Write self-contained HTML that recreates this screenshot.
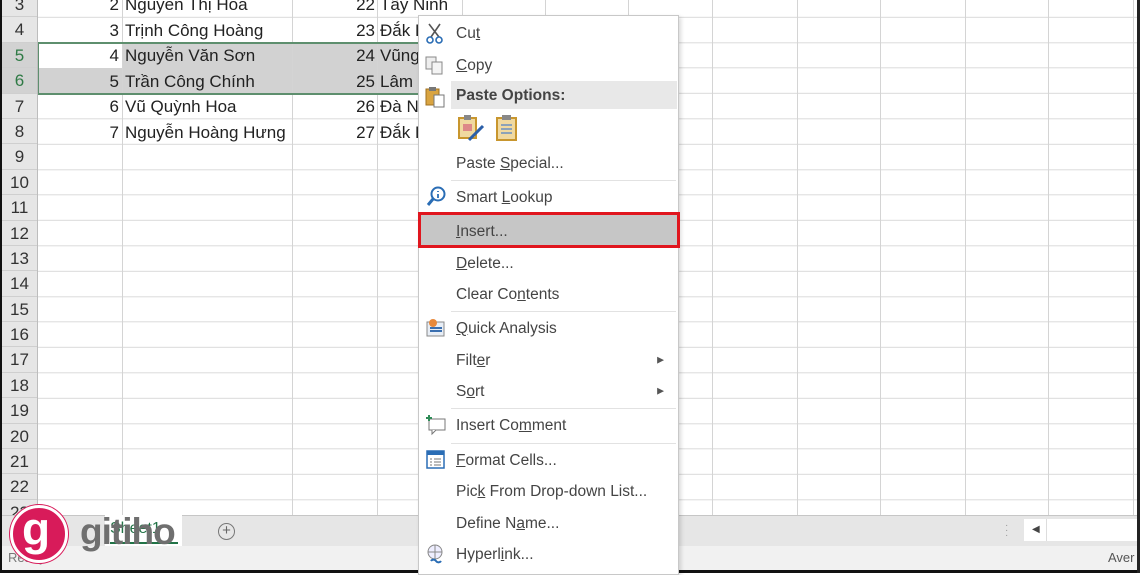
<!DOCTYPE html>
<html><head><meta charset="utf-8"><style>
*{margin:0;padding:0;box-sizing:border-box}
body{width:1140px;height:573px;overflow:hidden;background:#fff;position:relative;font-family:"Liberation Sans",sans-serif}
.grid{position:absolute;left:0;top:0;width:1140px;height:515px;
background-image:repeating-linear-gradient(to bottom,transparent 0,transparent 24.4px,#dadada 24.4px,#dadada 25.4px);background-position:0 -7.7px}
.vl{position:absolute;top:0;height:515px;width:1px;background:#d4d4d4}
.rh{position:absolute;left:2px;top:-8px;width:36px;background:#e6e6e6;border-right:1px solid #bdbdbd}
.rh div{height:25.4px;line-height:25.4px;text-align:center;font-size:17px;color:#333;border-bottom:1px solid #cfcfcf}
.c{position:absolute;font-size:17px;color:#222;height:25px;line-height:25px;white-space:nowrap}
.menu{position:absolute;left:418px;top:15px;width:261px;height:560px;background:#fff;border:1px solid #c8c8c8;box-shadow:2px 2px 4px rgba(0,0,0,.15)}
.mi{position:absolute;left:37px;font-size:15.5px;color:#444;white-space:nowrap;transform:translateY(-50%)}
.sep{position:absolute;left:32px;right:2px;height:1px;background:#e2e2e2}
.arr{position:absolute;right:14px;font-size:9px;color:#555;transform:translateY(-50%)}
</style></head><body>
<div class="grid"></div>
<div style="position:absolute;left:37px;top:43px;width:381px;height:51px;background:#d2d2d2"></div>
<div style="position:absolute;left:37px;top:43px;width:85px;height:25px;background:#fff"></div>
<div class="vl" style="left:122px"></div><div class="vl" style="left:292px"></div><div class="vl" style="left:377px"></div>
<div class="vl" style="left:462px"></div><div class="vl" style="left:545px"></div><div class="vl" style="left:628px"></div>
<div class="vl" style="left:712px"></div><div class="vl" style="left:797px"></div><div class="vl" style="left:880px"></div>
<div class="vl" style="left:965px"></div><div class="vl" style="left:1048px"></div><div class="vl" style="left:1133px"></div>
<div style="position:absolute;left:37px;top:42px;width:400px;height:53px;border:2px solid #5e8f6e"></div>
<div class="rh">
<div>3</div><div>4</div><div style="background:#d2d2d2;color:#2f7a45">5</div><div style="background:#d2d2d2;color:#2f7a45">6</div><div>7</div><div>8</div><div>9</div><div>10</div><div>11</div><div>12</div><div>13</div><div>14</div><div>15</div><div>16</div><div>17</div><div>18</div><div>19</div><div>20</div><div>21</div><div>22</div><div>23</div>
</div>
<div style="position:absolute;left:0;top:0;width:2px;height:573px;background:#111"></div>
<div class="c" style="right:1021px;top:-8px">2</div><div class="c" style="left:125px;top:-8px">Nguyen Thị Hoa</div><div class="c" style="right:765px;top:-8px">22</div><div class="c" style="left:380px;top:-8px">Tây Ninh</div>
<div class="c" style="right:1021px;top:18px">3</div><div class="c" style="left:125px;top:18px">Trịnh Công Hoàng</div><div class="c" style="right:765px;top:18px">23</div><div class="c" style="left:380px;top:18px">Đắk L</div>
<div class="c" style="right:1021px;top:43px">4</div><div class="c" style="left:125px;top:43px">Nguyễn Văn Sơn</div><div class="c" style="right:765px;top:43px">24</div><div class="c" style="left:380px;top:43px">Vũng</div>
<div class="c" style="right:1021px;top:69px">5</div><div class="c" style="left:125px;top:69px">Trần Công Chính</div><div class="c" style="right:765px;top:69px">25</div><div class="c" style="left:380px;top:69px">Lâm</div>
<div class="c" style="right:1021px;top:94px">6</div><div class="c" style="left:125px;top:94px">Vũ Quỳnh Hoa</div><div class="c" style="right:765px;top:94px">26</div><div class="c" style="left:380px;top:94px">Đà N</div>
<div class="c" style="right:1021px;top:120px">7</div><div class="c" style="left:125px;top:120px">Nguyễn Hoàng Hưng</div><div class="c" style="right:765px;top:120px">27</div><div class="c" style="left:380px;top:120px">Đắk L</div>
<!-- tab bar -->
<div style="position:absolute;left:2px;top:515px;width:1138px;height:31px;background:#e6e6e6;border-top:1px solid #c6c6c6"></div>
<div style="position:absolute;left:105px;top:515px;width:77px;height:31px;background:#fff"></div>
<div style="position:absolute;left:110px;top:520px;font-size:16px;color:#217346">Sheet1</div>
<div style="position:absolute;left:110px;top:542px;width:68px;height:2px;background:#217346"></div>
<div style="position:absolute;left:218px;top:523px;width:17px;height:17px;border:1.5px solid #777;border-radius:50%;text-align:center;line-height:13px;font-size:15px;color:#666">+</div>
<div style="position:absolute;left:1005px;top:523px;color:#999;font-size:10px;line-height:5px">·<br>·<br>·</div>
<div style="position:absolute;left:1024px;top:519px;width:116px;height:22px;background:#fff"></div>
<div style="position:absolute;left:1032px;top:524px;font-size:10px;color:#444">◀</div>
<div style="position:absolute;left:1046px;top:519px;width:1px;height:22px;background:#ddd"></div>
<div style="position:absolute;left:2px;top:546px;width:1138px;height:24px;background:#f1f1f1"></div>
<div style="position:absolute;left:8px;top:550px;font-size:13px;color:#777">Ready</div>
<div style="position:absolute;left:1108px;top:550px;font-size:13px;color:#555">Aver</div>
<div style="position:absolute;left:0;top:570px;width:1140px;height:3px;background:#111"></div>
<div style="position:absolute;left:1137px;top:0;width:3px;height:573px;background:#222"></div>
<!-- logo -->
<div style="position:absolute;left:10px;top:505px;width:58px;height:58px;border-radius:50%;background:#d81b5a;border:3px solid #fff;box-shadow:0 0 0 1px #d81b5a"></div>
<div style="position:absolute;left:22px;top:506px;font-size:46px;font-weight:bold;color:#fff;line-height:46px">g</div>
<div style="position:absolute;left:80px;top:511px;font-size:37px;font-weight:bold;color:#6f6f6f;letter-spacing:-1px;line-height:42px">gitiho</div>
<!-- menu -->
<div class="menu">
<div style="position:absolute;left:32px;top:65px;width:226px;height:28px;background:#e8e8e8"></div>
<div style="position:absolute;left:-1px;top:196px;width:262px;height:36px;background:#c6c6c6;border:3px solid #e0161e"></div>
<svg style="position:absolute;left:6px;top:7px" width="20" height="22" viewBox="0 0 20 22"><path d="M4 1L14 14M15 1L6 14" stroke="#555" stroke-width="1.6" fill="none"/><circle cx="5" cy="17" r="3" stroke="#2a6db5" stroke-width="1.6" fill="none"/><circle cx="14" cy="17" r="3" stroke="#2a6db5" stroke-width="1.6" fill="none"/></svg>
<svg style="position:absolute;left:6px;top:40px" width="20" height="20"><rect x="1" y="1" width="10" height="12" fill="#eee" stroke="#888"/><rect x="7" y="6" width="10" height="12" fill="#f4f4f4" stroke="#888"/></svg>
<svg style="position:absolute;left:6px;top:70px" width="22" height="22"><rect x="1" y="3" width="13" height="16" fill="#d9a441" stroke="#a07020"/><rect x="4" y="1" width="7" height="4" fill="#777"/><rect x="9" y="9" width="10" height="12" fill="#fff" stroke="#777"/></svg>
<svg style="position:absolute;left:38px;top:98px" width="28" height="30"><rect x="2" y="4" width="17" height="20" fill="#f0d9a0" stroke="#c8962e" stroke-width="2"/><rect x="7" y="1" width="7" height="5" fill="#888"/><rect x="6" y="10" width="9" height="7" fill="#d88" /><path d="M26 12L12 26" stroke="#2b5fa8" stroke-width="3"/></svg>
<svg style="position:absolute;left:76px;top:98px" width="24" height="30"><rect x="2" y="4" width="19" height="22" fill="#f0d9a0" stroke="#c8962e" stroke-width="2"/><rect x="7" y="1" width="9" height="5" fill="#888"/><path d="M6 11h11M6 15h11M6 19h11" stroke="#6b8fc0" stroke-width="1.5"/></svg>
<svg style="position:absolute;left:7px;top:170px" width="20" height="22"><circle cx="12" cy="8" r="6.5" stroke="#2a6db5" stroke-width="2" fill="#fff"/><path d="M12 5v1M12 8v4" stroke="#2a6db5" stroke-width="1.8"/><path d="M7 13L2 19" stroke="#2a6db5" stroke-width="3"/></svg>
<svg style="position:absolute;left:7px;top:302px" width="20" height="20"><rect x="1" y="4" width="17" height="14" fill="#e8eef6" stroke="#888"/><circle cx="7" cy="5" r="4" fill="#e8893b"/><path d="M4 10h12M4 13h12" stroke="#3a6fb0" stroke-width="2"/></svg>
<svg style="position:absolute;left:6px;top:398px" width="22" height="22"><rect x="4" y="5" width="16" height="11" fill="#fff" stroke="#777"/><path d="M7 16v4l4-4" fill="#fff" stroke="#777"/><path d="M4 1v6M1 4h6" stroke="#2e8b57" stroke-width="2"/></svg>
<svg style="position:absolute;left:7px;top:434px" width="20" height="20"><rect x="1" y="1" width="17" height="17" fill="#fff" stroke="#2a6db5" stroke-width="1.5"/><rect x="1" y="1" width="17" height="4" fill="#2a6db5"/><path d="M4 9h2M8 9h7M4 12h2M8 12h7M4 15h2M8 15h7" stroke="#777"/></svg>
<svg style="position:absolute;left:7px;top:528px" width="20" height="22"><circle cx="9" cy="8" r="7" stroke="#888" fill="#eef" /><path d="M2 8h14M9 1v14" stroke="#888"/><path d="M5 17a3 3 0 0 1 5 0a3 3 0 0 0 5 0" stroke="#2a6db5" stroke-width="2" fill="none"/></svg>
<div class="mi" style="top:18px">Cu<u>t</u></div>
<div class="mi" style="top:50px"><u>C</u>opy</div>
<div class="mi" style="top:80px;font-weight:bold;color:#444">Paste Options:</div>
<div class="mi" style="top:148px">Paste <u>S</u>pecial...</div>
<div class="sep" style="top:164px"></div>
<div class="mi" style="top:182px">Smart <u>L</u>ookup</div>
<div class="mi" style="top:216px"><u>I</u>nsert...</div>
<div class="mi" style="top:248px"><u>D</u>elete...</div>
<div class="mi" style="top:279px">Clear Co<u>n</u>tents</div>
<div class="sep" style="top:295px"></div>
<div class="mi" style="top:313px"><u>Q</u>uick Analysis</div>
<div class="mi" style="top:345px">Filt<u>e</u>r</div><div class="arr" style="top:344px">▶</div>
<div class="mi" style="top:376px">S<u>o</u>rt</div><div class="arr" style="top:375px">▶</div>
<div class="sep" style="top:392px"></div>
<div class="mi" style="top:410px">Insert Co<u>m</u>ment</div>
<div class="sep" style="top:427px"></div>
<div class="mi" style="top:445px"><u>F</u>ormat Cells...</div>
<div class="mi" style="top:476px">Pic<u>k</u> From Drop-down List...</div>
<div class="mi" style="top:508px">Define N<u>a</u>me...</div>
<div class="mi" style="top:539px">Hyperl<u>i</u>nk...</div>
</div>
</body></html>
